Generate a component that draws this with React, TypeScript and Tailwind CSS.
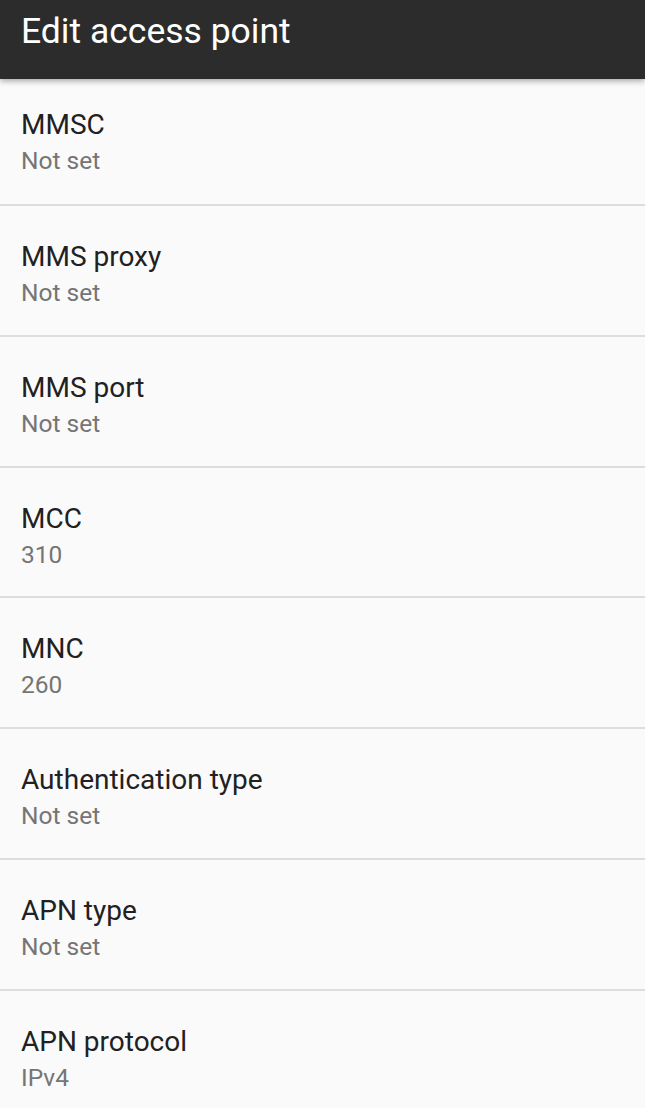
const items = [
  { title: "MMSC", value: "Not set" },
  { title: "MMS proxy", value: "Not set" },
  { title: "MMS port", value: "Not set" },
  { title: "MCC", value: "310" },
  { title: "MNC", value: "260" },
  { title: "Authentication type", value: "Not set" },
  { title: "APN type", value: "Not set" },
  { title: "APN protocol", value: "IPv4" },
];

export default function App() {
  return (
    <div className="flex h-[1108px] flex-col overflow-hidden bg-[#fafafa] font-['Roboto',sans-serif]">
      <div className="relative z-10 h-[79px] shrink-0 bg-[#2c2c2c] px-[21px] pt-[11px] shadow-[0_2px_6px_rgba(0,0,0,0.35)]">
        <h1 className="text-[35.5px] leading-[41px] text-white">Edit access point</h1>
      </div>
      <div className="flex flex-col">
        {items.map((item, i) => (
          <div
            key={item.title}
            className={
              i === 0
                ? "h-[127px] shrink-0 border-b-2 border-[#dddddd] px-[21px] pt-[28px]"
                : "h-[130.8px] shrink-0 border-b-2 border-[#dddddd] px-[21px] pt-[33px]"
            }
          >
            <div className="text-[28px] leading-[36px] text-[#212121]">{item.title}</div>
            <div className="text-[24.5px] leading-[36px] text-[#757575]">{item.value}</div>
          </div>
        ))}
      </div>
    </div>
  );
}
